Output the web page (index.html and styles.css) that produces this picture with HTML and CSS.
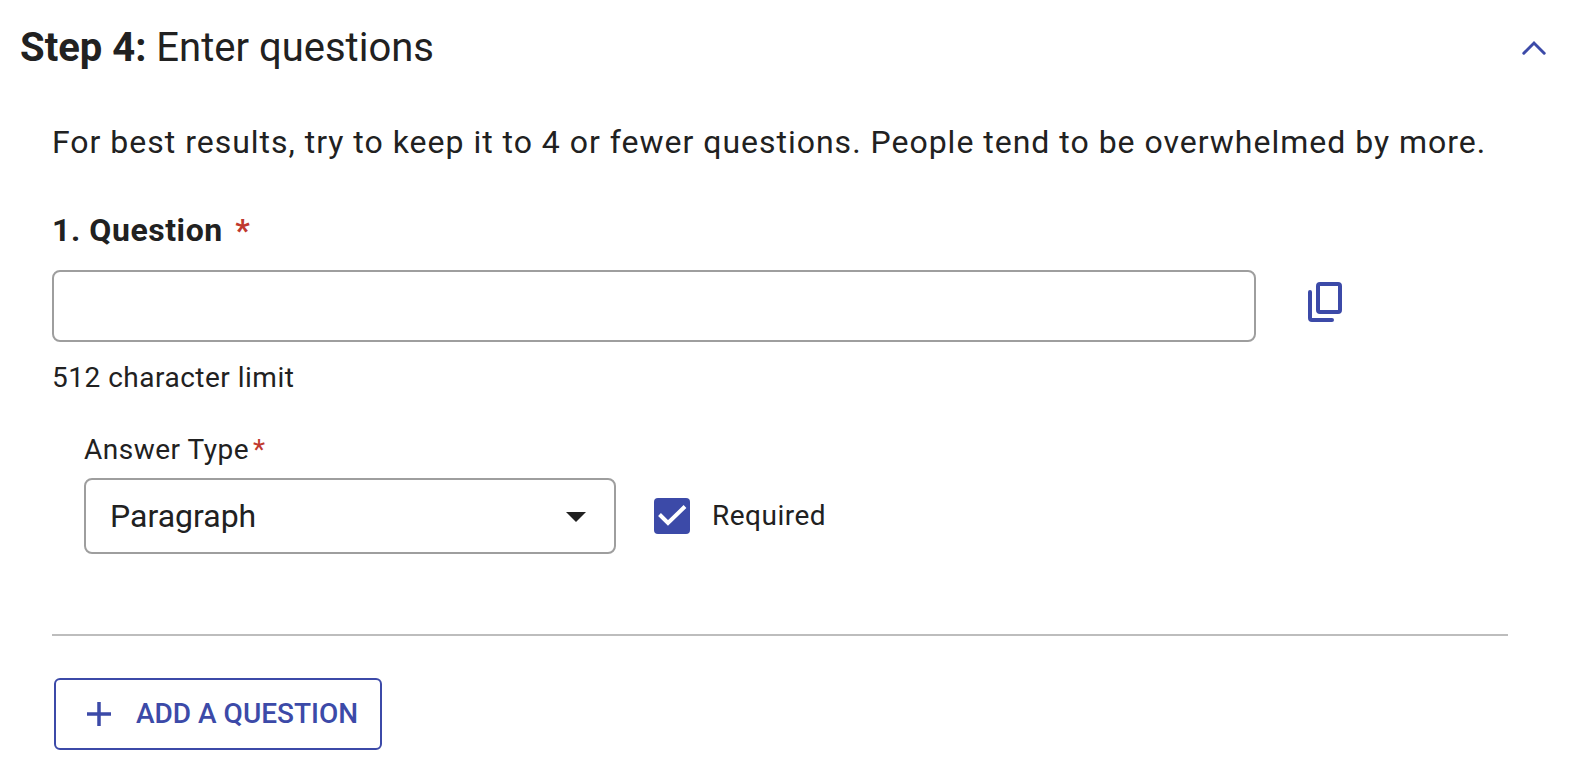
FILE: index.html
```html
<!DOCTYPE html>
<html lang="en">
<head>
<meta charset="utf-8">
<title>Enter questions</title>
<link rel="stylesheet" href="styles.css">
</head>
<body>
<main class="step">
  <header class="step-header">
    <h1 class="step-title"><b>Step 4:</b> Enter questions</h1>
    <svg class="chevron" viewBox="0 0 24 16"><path d="M1.800 13.200 12 3l10.200 10.200"/></svg>
  </header>
  <section class="step-body">
    <p class="hint">For best results, try to keep it to 4 or fewer questions. People tend to be overwhelmed by more.</p>
    <label class="question-label" for="question">1. Question <span class="star">*</span></label>
    <div class="question-row">
      <input class="question-input" id="question" type="text">
      <svg class="copy" viewBox="0 0 34 40"><rect x="10" y="2" width="22" height="28" rx="2"/><path d="M2 10v26q0 2 2 2h20"/></svg>
    </div>
    <p class="limit">512 character limit</p>
    <div class="answer">
      <div class="answer-label">Answer Type<span class="star">*</span></div>
      <div class="answer-row">
        <div class="select"><span>Paragraph</span><svg class="caret" viewBox="0 0 20 10"><path d="M0 0h20L10 10z"/></svg></div>
        <div class="checkbox"><svg viewBox="0 0 36 36"><path d="M5.500 16.500l8.500 8.500L31 8.500"/></svg></div>
        <span class="required">Required</span>
      </div>
    </div>
    <hr class="divider">
    <button class="add"><svg class="plus" viewBox="0 0 24 24"><path d="M12 0v24M0 12h24"/></svg><span>ADD A QUESTION</span></button>
  </section>
</main>
</body>
</html>
```
FILE: styles.css
```css
* { box-sizing: border-box; }
body {
  margin: 0;
  background: #fff;
  color: #212121;
  font-family: Roboto, sans-serif;
}
svg { display: block; fill: none; flex: none; }
.step { height: 774px; overflow: hidden; }
.step-header {
  display: flex;
  align-items: center;
  justify-content: space-between;
  height: 96px;
  padding: 0 38px 0 20px;
}
.step-title {
  margin: 0;
  font-size: 40px;
  font-weight: 400;
  line-height: 64px;
}
.step-title b { font-weight: 700; }
.chevron { width: 24px; height: 16px; stroke: #3c4aa8; stroke-width: 3; stroke-linecap: round; }
.step-body { padding: 22px 76px 0 52px; }
.hint {
  margin: 0 0 40px;
  font-size: 32px;
  line-height: 48px;
  letter-spacing: 0.99px;
  white-space: nowrap;
}
.question-label {
  display: block;
  height: 64px;
  font-size: 32px;
  font-weight: 700;
  line-height: 48px;
  letter-spacing: 0.56px;
}
.star { color: #c0392f; }
.question-label .star { margin-left: 4px; }
.question-row { display: flex; align-items: flex-start; gap: 52px; }
.question-input {
  width: 1204px;
  height: 72px;
  padding: 0 24px;
  border: 2px solid #9e9e9e;
  border-radius: 8px;
  background: #fff;
  font: 32px Roboto, sans-serif;
}
.copy { width: 34px; height: 40px; margin-top: 12px; stroke: #3c4aa8; stroke-width: 4; stroke-linecap: round; }
.limit { margin: 16px 0 0; font-size: 28px; line-height: 40px; letter-spacing: 0.5px; }
.answer { padding: 32px 0 0 32px; }
.answer-label { height: 48px; font-size: 28px; line-height: 40px; letter-spacing: 0.5px; }
.answer-label .star { margin-left: 4px; }
.answer-row { display: flex; align-items: center; }
.select {
  display: flex;
  align-items: center;
  justify-content: space-between;
  width: 532px;
  height: 76px;
  padding: 0 28px 0 24px;
  border: 2px solid #9e9e9e;
  border-radius: 8px;
  font-size: 32px;
  line-height: 48px;
}
.caret { width: 20px; height: 10px; margin-top: 2px; fill: #212121; }
.checkbox { width: 36px; height: 36px; margin: 0 22px 0 38px; border-radius: 4px; background: #3c4aa8; }
.checkbox svg { width: 36px; height: 36px; stroke: #fff; stroke-width: 4; }
.required { font-size: 28px; line-height: 40px; letter-spacing: 0.5px; }
.divider { height: 2px; margin: 80px 0 42px; border: 0; background: #bdbdbd; }
.add {
  display: flex;
  align-items: center;
  gap: 25px;
  width: 328px;
  height: 72px;
  margin: 0 0 0 2px;
  padding: 0 0 0 31px;
  border: 2px solid #3c4aa8;
  border-radius: 6px;
  background: #fff;
  color: #3c4aa8;
  font: 500 28px/40px Roboto, sans-serif;
  white-space: nowrap;
}
.plus { width: 24px; height: 24px; stroke: #3c4aa8; stroke-width: 3.5; }
```
